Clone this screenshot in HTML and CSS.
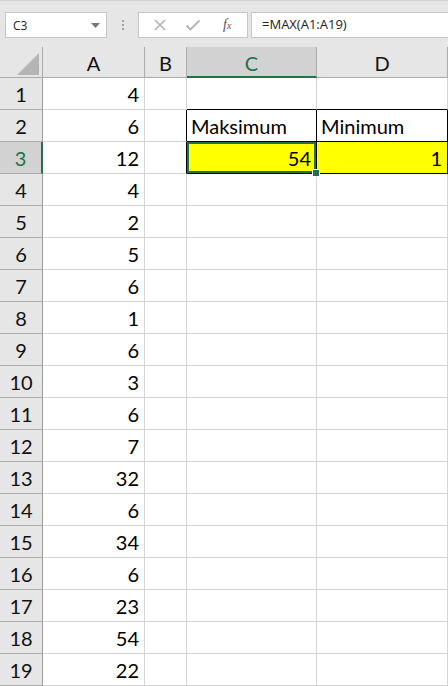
FILE: index.html
```html
<!DOCTYPE html>
<html>
<head>
<title>Sheet</title>
<link rel="stylesheet" href="styles.css">
</head>
<body>
<div class="toolbar">
  <div class="namebox">
    <span class="name">C3</span>
    <svg class="caret" width="9" height="5" viewBox="0 0 9 5"><path d="M0 0h9L4.5 5z" fill="#777"/></svg>
  </div>
  <div class="grip"><i></i><i></i><i></i></div>
  <div class="buttons">
    <svg class="btn" width="14" height="14" viewBox="0 0 14 14"><path d="M2 2L12 12M12 2L2 12" stroke="#b3b3b3" stroke-width="1.6" fill="none"/></svg>
    <svg class="btn" width="16" height="14" viewBox="0 0 16 14"><path d="M1.5 7.5L5.5 11.5L14.5 2.5" stroke="#b3b3b3" stroke-width="1.8" fill="none"/></svg>
    <span class="fx">f<small>x</small></span>
  </div>
  <div class="formula">=MAX(A1:A19)</div>
</div>

<div class="sheet">
  <div class="corner"><span class="tri"></span></div>
  <div class="colhead">A</div>
  <div class="colhead">B</div>
  <div class="colhead active">C</div>
  <div class="colhead">D</div>

  <div class="rowhead">1</div><div class="cell num">4</div><div class="cell"></div><div class="cell over"></div><div class="cell over"></div>
  <div class="rowhead">2</div><div class="cell num">6</div><div class="cell before"></div><div class="cell boxed">Maksimum</div><div class="cell boxed">Minimum</div>
  <div class="rowhead active">3</div><div class="cell num">12</div><div class="cell before"></div><div class="cell num boxed yellow selected">54<span class="handle"></span></div><div class="cell num boxed yellow">1</div>
  <div class="rowhead">4</div><div class="cell num">4</div><div class="cell"></div><div class="cell"></div><div class="cell"></div>
  <div class="rowhead">5</div><div class="cell num">2</div><div class="cell"></div><div class="cell"></div><div class="cell"></div>
  <div class="rowhead">6</div><div class="cell num">5</div><div class="cell"></div><div class="cell"></div><div class="cell"></div>
  <div class="rowhead">7</div><div class="cell num">6</div><div class="cell"></div><div class="cell"></div><div class="cell"></div>
  <div class="rowhead">8</div><div class="cell num">1</div><div class="cell"></div><div class="cell"></div><div class="cell"></div>
  <div class="rowhead">9</div><div class="cell num">6</div><div class="cell"></div><div class="cell"></div><div class="cell"></div>
  <div class="rowhead">10</div><div class="cell num">3</div><div class="cell"></div><div class="cell"></div><div class="cell"></div>
  <div class="rowhead">11</div><div class="cell num">6</div><div class="cell"></div><div class="cell"></div><div class="cell"></div>
  <div class="rowhead">12</div><div class="cell num">7</div><div class="cell"></div><div class="cell"></div><div class="cell"></div>
  <div class="rowhead">13</div><div class="cell num">32</div><div class="cell"></div><div class="cell"></div><div class="cell"></div>
  <div class="rowhead">14</div><div class="cell num">6</div><div class="cell"></div><div class="cell"></div><div class="cell"></div>
  <div class="rowhead">15</div><div class="cell num">34</div><div class="cell"></div><div class="cell"></div><div class="cell"></div>
  <div class="rowhead">16</div><div class="cell num">6</div><div class="cell"></div><div class="cell"></div><div class="cell"></div>
  <div class="rowhead">17</div><div class="cell num">23</div><div class="cell"></div><div class="cell"></div><div class="cell"></div>
  <div class="rowhead">18</div><div class="cell num">54</div><div class="cell"></div><div class="cell"></div><div class="cell"></div>
  <div class="rowhead">19</div><div class="cell num">22</div><div class="cell"></div><div class="cell"></div><div class="cell"></div>
</div>
</body>
</html>
```

FILE: styles.css
```css
body {
  margin: 0;
  background-color: #e6e6e6;
  font-family: "Open Sans", sans-serif;
  overflow: hidden;
}
.toolbar {
  border-top: 1px solid #d2d2d2;
  display: flex;
  align-items: flex-start;
  padding-top: 11px;
  box-sizing: border-box;
  height: 47px;
}
.namebox {
  margin-left: 5px;
  background: #fff;
  border: 1px solid #c6c6c6;
  display: flex;
  align-items: center;
  justify-content: space-between;
  padding: 0 6px 0 7px;
  box-sizing: border-box;
  width: 102px;
  height: 26px;
}
.name {
  font-size: 12px;
  color: #222;
}
.grip {
  width: 31px;
  height: 26px;
  display: flex;
  flex-direction: column;
  align-items: center;
  justify-content: center;
  gap: 2px;
}
.grip i {
  width: 2px;
  height: 2px;
  background: #a0a0a0;
}
.buttons {
  width: 110px;
  height: 26px;
  background: #fff;
  border: 1px solid #c6c6c6;
  box-sizing: border-box;
  display: flex;
  align-items: center;
  padding-left: 14px;
  gap: 18px;
}
.fx {
  font-family: "Liberation Serif", serif;
  font-style: italic;
  font-size: 14px;
  color: #555;
  margin-left: 4px;
}
.fx small {
  font-size: 10px;
}
.formula {
  flex: 1;
  height: 26px;
  margin-left: 3px;
  background: #fff;
  border: 1px solid #c6c6c6;
  border-right: none;
  box-sizing: border-box;
  font-size: 13px;
  color: #222;
  padding-left: 10px;
  line-height: 23px;
}
.sheet {
  display: grid;
  grid-template-columns: 43px 102px 42px 130px 131px;
  grid-template-rows: 31px repeat(19, 32px);
  background: #fff;
  font-family: "Lato", sans-serif;
  font-size: 20px;
}
.corner {
  background: #e6e6e6;
  border-right: 1px solid #ababab;
  border-bottom: 1px solid #ababab;
  position: relative;
}
.tri {
  position: absolute;
  right: 3px;
  bottom: 2px;
  width: 0;
  height: 0;
  border-left: 22px solid transparent;
  border-bottom: 22px solid #b4b4b4;
}
.colhead {
  background: #e6e6e6;
  border-right: 1px solid #ababab;
  border-bottom: 1px solid #ababab;
  display: flex;
  align-items: center;
  justify-content: center;
  color: #111;
  padding-top: 2px;
}
.colhead.active {
  background: #d2d2d2;
  color: #217346;
  border-bottom: 2px solid #217346;
}
.rowhead {
  background: #e6e6e6;
  border-right: 1px solid #9b9b9b;
  border-bottom: 1px solid #ababab;
  display: flex;
  align-items: flex-end;
  justify-content: center;
  padding-bottom: 3px;
  color: #111;
}
.rowhead.active {
  background: #d2d2d2;
  color: #217346;
  border-right: 2px solid #217346;
}
.cell {
  border-right: 1px solid #d4d4d4;
  border-bottom: 1px solid #d4d4d4;
  display: flex;
  align-items: flex-end;
  padding: 0 4px 3px 4px;
  color: #000;
  position: relative;
}
.cell.num {
  justify-content: flex-end;
  padding-right: 5px;
}
.cell.boxed {
  border-right-color: #000;
  border-bottom-color: #000;
}
.cell.over {
  border-bottom-color: #000;
}
.cell.before {
  border-right-color: #000;
}
.cell.yellow {
  background: #ffff00;
}
.cell.selected {
  box-shadow: inset 0 0 0 2px #217346;
}
.handle {
  position: absolute;
  right: -4px;
  bottom: -4px;
  width: 6px;
  height: 6px;
  background: #217346;
  border: 1px solid #fff;
  z-index: 2;
}
```
